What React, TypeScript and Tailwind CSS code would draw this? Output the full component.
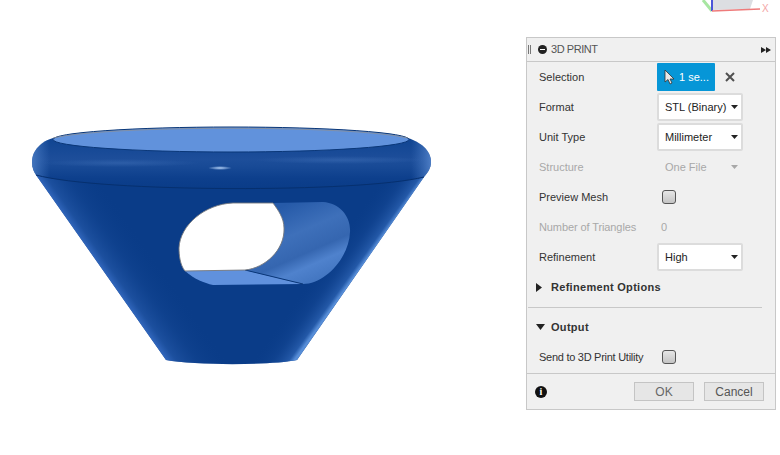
import React from "react";

const font = { fontFamily: '"Liberation Sans", Arial, sans-serif' };

function Caret({ className = "fill-[#222]" }: { className?: string }) {
  return (
    <svg width="7" height="4" viewBox="0 0 7 4" className={className}>
      <path d="M0 0H7L3.5 4Z" />
    </svg>
  );
}

function Select({ value }: { value: string }) {
  return (
    <div className="w-[86px] h-[28px] bg-white border-2 border-[#dcdcdc] rounded-[2px] flex items-center justify-between pl-[6px] pr-[3px] text-[#222]">
      <span className="whitespace-nowrap">{value}</span>
      <Caret />
    </div>
  );
}

function Check() {
  return (
    <div className="w-[14px] h-[14px] rounded-[3px] border border-[#555] bg-gradient-to-b from-[#e6e6e6] to-[#c4c4c4]" />
  );
}

function Row({ label, disabled, tight, children }: { label: string; disabled?: boolean; tight?: string; children?: React.ReactNode }) {
  return (
    <div className={`h-[30px] flex items-center pl-[12px] ${disabled ? "text-[#a8a8a8]" : "text-[#333]"}`}>
      <span className={`w-[118px] shrink-0 whitespace-nowrap ${tight ?? ""}`}>{label}</span>
      {children}
    </div>
  );
}

const RIM =
  "M53 138C42 141 32 150 32 162C32 168 34 172 36 175C100 192.500 360 193 424 177C428 172 431 168 431 162C431 150 420 142 408 138C350 124 110 124 53 138Z";
const CONE = "M36 175C100 186 360 188 424 177L297 360C270 365.500 195 365.500 166 360Z";

function Scene() {
  return (
    <svg width="526" height="455" viewBox="0 0 526 455" className="shrink-0 block">
      <defs>
        <linearGradient id="edgeL" x1="100" y1="266" x2="141" y2="237" gradientUnits="userSpaceOnUse">
          <stop offset="0" stopColor="#3a70c8" stopOpacity="0.8" />
          <stop offset="0.15" stopColor="#2458a8" stopOpacity="0.7" />
          <stop offset="0.5" stopColor="#174a98" stopOpacity="0.35" />
          <stop offset="1" stopColor="#0a3c88" stopOpacity="0" />
        </linearGradient>
        <linearGradient id="edgeR" x1="360" y1="268" x2="332" y2="248" gradientUnits="userSpaceOnUse">
          <stop offset="0" stopColor="#5f96e0" stopOpacity="0.9" />
          <stop offset="0.12" stopColor="#2a60b0" stopOpacity="0.8" />
          <stop offset="0.5" stopColor="#174a98" stopOpacity="0.4" />
          <stop offset="1" stopColor="#0a3c88" stopOpacity="0" />
        </linearGradient>
        <linearGradient id="rim" x1="0" x2="0" y1="140" y2="188" gradientUnits="userSpaceOnUse">
          <stop offset="0" stopColor="#114592" />
          <stop offset="0.4" stopColor="#1d4e9a" />
          <stop offset="0.55" stopColor="#184a96" />
          <stop offset="0.8" stopColor="#0d3f8c" />
          <stop offset="1" stopColor="#0a3c88" />
        </linearGradient>
        <linearGradient id="rimSide" x1="32" x2="431" y1="0" y2="0" gradientUnits="userSpaceOnUse">
          <stop offset="0" stopColor="#4a7cc4" stopOpacity="0.85" />
          <stop offset="0.045" stopColor="#3f72bd" stopOpacity="0" />
          <stop offset="0.95" stopColor="#3f72bd" stopOpacity="0" />
          <stop offset="1" stopColor="#5585cc" stopOpacity="0.85" />
        </linearGradient>
        <linearGradient id="wall" x1="285" x2="320" y1="205" y2="285" gradientUnits="userSpaceOnUse">
          <stop offset="0" stopColor="#265aa8" />
          <stop offset="0.35" stopColor="#3e70ba" />
          <stop offset="0.6" stopColor="#3566b0" />
          <stop offset="0.75" stopColor="#4f82cd" />
          <stop offset="1" stopColor="#3f72bd" />
        </linearGradient>
        <radialGradient id="spec" cx="0.5" cy="0.5" r="0.5">
          <stop offset="0" stopColor="#b5d2f8" />
          <stop offset="1" stopColor="#b5d2f8" stopOpacity="0" />
        </radialGradient>
        <radialGradient id="sheen" cx="0.5" cy="0.5" r="0.5">
          <stop offset="0" stopColor="#3c6cb4" stopOpacity="0.55" />
          <stop offset="1" stopColor="#3c6cb4" stopOpacity="0" />
        </radialGradient>
      </defs>

      {/* cone */}
      <path d={CONE} fill="#0a3c88" />
      <path d={CONE} fill="url(#edgeL)" />
      <path d={CONE} fill="url(#edgeR)" />
      {/* rim */}
      <path d={RIM} fill="url(#rim)" />
      <path d={RIM} fill="url(#rimSide)" />
      <ellipse cx="120" cy="163" rx="80" ry="4" fill="url(#sheen)" />
      <ellipse cx="340" cy="160" rx="85" ry="4" fill="url(#sheen)" />
      {/* seam */}
      <path d="M36 175C100 192.500 360 193 424 177" fill="none" stroke="#06306f" strokeWidth="1" />
      {/* top disc */}
      <ellipse cx="231" cy="139.500" rx="178" ry="12.500" fill="#6192dc" stroke="#0a3778" strokeWidth="1" />
      <path d="M53 138C110 125 350 125 408 138" fill="none" stroke="#8a8f98" strokeWidth="0.8" />
      {/* specular */}
      <ellipse cx="220" cy="168" rx="12" ry="2" fill="url(#spec)" />

      {/* hole */}
      <path d="M273 203L323 202C340 203 351 217 350 232C349 258 325 284 303 284L245 270C265 268 285 250 284 228C283 218 278 210 273 203Z" fill="url(#wall)" />
      <path d="M185 271L245 270L303 284L213 285C204 283 194 279 185 271Z" fill="#6091dd" />
      <path d="M245 270L303 284" stroke="#0a3778" strokeWidth="1" fill="none" />
      <path
        d="M185 271C180 265 179 255 179 248C180 225 205 204 233 203L273 203C278 210 284 218 284 228C285 250 265 268 245 270Z"
        fill="#fff"
        stroke="#77797e"
        strokeWidth="0.9"
      />
    </svg>
  );
}

function Triad() {
  return (
    <svg width="254" height="37" viewBox="526 0 254 37" className="block shrink-0">
      <path d="M712 0H753L750 9L712 10Z" fill="#dcdee2" />
      <path d="M703 0L712 11" stroke="#a8e6a2" strokeWidth="3" />
      <path d="M712 0V11" stroke="#4a55d8" strokeWidth="2" />
      <path d="M712 11L760 9" stroke="#ee7b7b" strokeWidth="1.500" />
      <text x="762" y="12" fontSize="10" fill="#f3a6a6" style={font}>X</text>
    </svg>
  );
}

function Panel() {
  return (
    <div className="w-[250px] h-[373px] bg-[#f0f0f0] border border-[#c8c8c8] flex flex-col text-[11px]">
      <div className="h-[24px] shrink-0 flex items-center border-b border-[#c8c8c8] text-[#555]">
        <span className="ml-[1px] w-[3px] h-[9px] border-l border-r border-[#777]" />
        <span className="ml-[7px] w-[9px] h-[9px] rounded-full bg-[#222] flex items-center justify-center">
          <span className="w-[5px] h-[1.500px] bg-white" />
        </span>
        <span className="ml-[4px] tracking-[-0.45px]">3D PRINT</span>
        <svg width="10" height="6" viewBox="0 0 10 6" className="ml-auto mr-[4px] fill-[#222]">
          <path d="M0 0L5 3L0 6ZM5 0L10 3L5 6Z" />
        </svg>
      </div>
      <div className="flex-1 flex flex-col">
        <Row label="Selection">
          <div className="w-[58px] h-[28px] bg-[#0696d7] rounded-[1px] flex items-center pl-[7px] text-white gap-[4px]">
            <svg width="11" height="16" viewBox="0 0 11 16">
              <path d="M1 1V13L4 10.500L6 15L8 14L6 10H10Z" fill="#e8e8e8" stroke="#333" strokeWidth="0.8" />
            </svg>
            <span className="whitespace-nowrap">1 se...</span>
          </div>
          <svg width="10" height="10" viewBox="0 0 10 10" className="ml-[10px]">
            <path d="M1 1L9 9M9 1L1 9" stroke="#505050" strokeWidth="2" />
          </svg>
        </Row>
        <Row label="Format"><Select value="STL (Binary)" /></Row>
        <Row label="Unit Type"><Select value="Millimeter" /></Row>
        <Row label="Structure" disabled>
          <div className="w-[86px] flex items-center justify-between pl-[8px] pr-[5px]">
            <span>One File</span>
            <Caret className="fill-[#a8a8a8]" />
          </div>
        </Row>
        <Row label="Preview Mesh"><span className="ml-[5px]"><Check /></span></Row>
        <Row label="Number of Triangles" disabled tight="tracking-[-0.1px]"><span className="ml-[4px]">0</span></Row>
        <Row label="Refinement"><Select value="High" /></Row>
        <div className="h-[30px] flex items-center pl-[9px] font-bold text-[#333]">
          <svg width="6" height="9" viewBox="0 0 6 9" className="fill-[#222]"><path d="M0 0L6 4.500L0 9Z" /></svg>
          <span className="ml-[9px] tracking-[0.3px]">Refinement Options</span>
        </div>
        <div className="h-px bg-[#c8c8c8] ml-[1px] mr-[13px] mt-[5px]" />
        <div className="h-[30px] mt-[4px] flex items-center pl-[9px] font-bold text-[#333]">
          <svg width="9" height="6" viewBox="0 0 9 6" className="fill-[#222]"><path d="M0 0H9L4.500 6Z" /></svg>
          <span className="ml-[6px] tracking-[0.3px]">Output</span>
        </div>
        <Row label="Send to 3D Print Utility" tight="tracking-[-0.27px]"><span className="ml-[5px]"><Check /></span></Row>
      </div>
      <div className="h-[36px] shrink-0 border-t border-[#c8c8c8] flex items-center pl-[8px] pr-[10px]">
        <span className="w-[12px] h-[12px] rounded-full bg-[#111] text-white flex items-center justify-center text-[10px] font-bold" style={{ fontFamily: '"Liberation Serif", serif' }}>i</span>
        <div className="ml-auto w-[60px] h-[19px] bg-[#e6e6e6] border border-[#c4c4c4] flex items-center justify-center text-[12px] text-[#666]">OK</div>
        <div className="ml-[10px] mr-[1px] w-[60px] h-[19px] bg-[#e6e6e6] border border-[#c4c4c4] flex items-center justify-center text-[12px] text-[#555]">Cancel</div>
      </div>
    </div>
  );
}

export default function App() {
  return (
    <div className="w-[780px] h-[455px] bg-white flex overflow-hidden" style={font}>
      <Scene />
      <div className="flex flex-col">
        <Triad />
        <Panel />
      </div>
    </div>
  );
}
